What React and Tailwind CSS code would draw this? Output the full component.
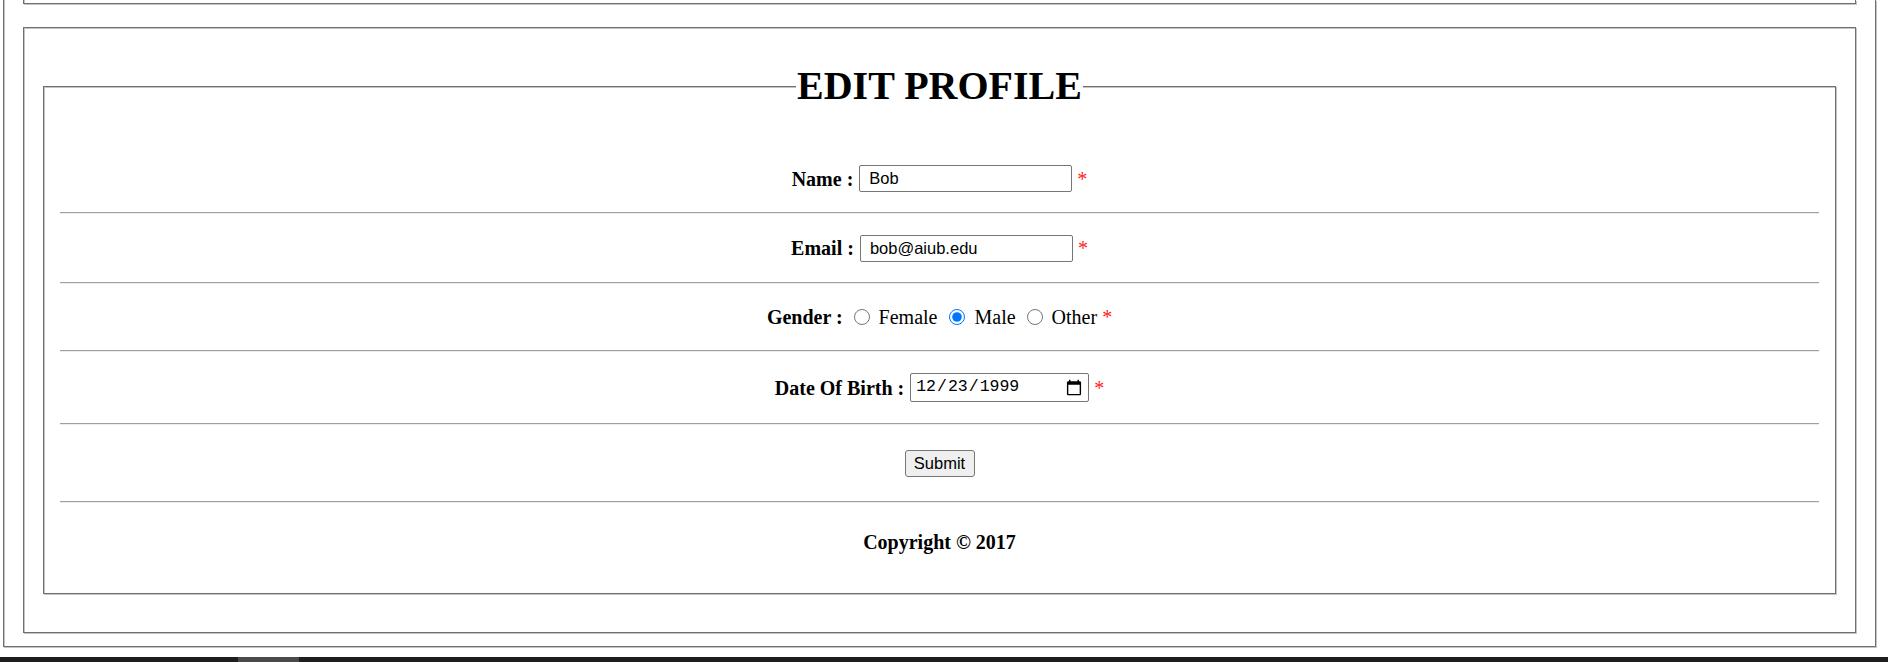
import React from 'react';

const box =
  'border border-[#707070] shadow-[1px_1px_0_#c4c4c4,inset_1px_1px_0_#c4c4c4]';
const label = "font-['Liberation_Serif',serif] text-[20px] font-bold text-black";
const star = "font-['Liberation_Serif',serif] text-[20px] text-[#ff2020]";
const field =
  "h-[27px] w-[213px] border border-[#767676] rounded-[2px] bg-white pl-[9px] font-['Liberation_Sans',sans-serif] text-[16.5px] text-black outline-none";

function Rule() {
  return <div className="border-t border-b border-t-[#a0a0a0] border-b-[#ececec]" />;
}

function TextRow({ name, value, height }) {
  return (
    <div className={`flex items-center justify-center ${height}`}>
      <span className={label}>{name} :</span>
      <input type="text" defaultValue={value} className={`ml-[6px] ${field}`} />
      <span className={`ml-[5px] ${star}`}>*</span>
    </div>
  );
}

export default function App() {
  const genders = ['Female', 'Male', 'Other'];

  return (
    <div className="h-[662px] w-full overflow-hidden bg-white font-['Liberation_Serif',serif]">
      <div className="ml-[3px] w-[1873px] border-x border-b border-[#707070] px-[19px] pb-[13px] shadow-[1px_1px_0_#c4c4c4,inset_1px_0_0_#c4c4c4]">
        <div className="h-[4px] border-x border-b border-[#707070] shadow-[1px_1px_0_#c4c4c4,inset_1px_0_0_#c4c4c4]" />

        <div className={`mt-[23px] px-[19px] pt-[35px] pb-[38px] ${box}`}>
          <fieldset className="border border-[#707070] px-[16px] pb-[12px] shadow-[1px_1px_0_#c4c4c4,inset_1px_1px_0_#c4c4c4]">
            <legend className="mx-auto bg-white px-[1px] text-[40px] leading-[46px] font-bold text-black">
              EDIT PROFILE
            </legend>

            <div className="mt-[36px]" />
            <TextRow name="Name" value="Bob" height="h-[67px]" />
            <Rule />
            <TextRow name="Email" value="bob@aiub.edu" height="h-[68px]" />
            <Rule />

            <div className="flex h-[66px] items-center justify-center text-[20px] text-black">
              <span className={label}>Gender :</span>
              {genders.map((g, i) => (
                <React.Fragment key={g}>
                  <input
                    type="radio"
                    name="gender"
                    defaultChecked={g === 'Male'}
                    className={`h-[16px] w-[16px] ${i === 1 ? 'ml-[12px]' : 'ml-[11px]'}`}
                  />
                  <span className="ml-[9px]">{g}</span>
                </React.Fragment>
              ))}
              <span className={`ml-[5px] ${star}`}>*</span>
            </div>
            <Rule />

            <div className="flex h-[71px] items-center justify-center">
              <span className={label}>Date Of Birth :</span>
              <input
                type="date"
                defaultValue="1999-12-23"
                className="ml-[6px] h-[29px] w-[179px] border border-[#767676] rounded-[2px] bg-white pl-[4px] pr-[5px] font-['Liberation_Mono',monospace] text-[16.5px] text-black outline-none [&::-webkit-calendar-picker-indicator]:h-[18px] [&::-webkit-calendar-picker-indicator]:w-[18px] [&::-webkit-calendar-picker-indicator]:p-0"
              />
              <span className={`ml-[5px] ${star}`}>*</span>
            </div>
            <Rule />

            <div className="flex h-[76px] items-center justify-center">
              <button
                type="button"
                className="h-[27px] w-[70px] border border-[#767676] rounded-[3px] bg-[#efefef] font-['Liberation_Sans',sans-serif] text-[16.5px] text-black"
              >
                Submit
              </button>
            </div>
            <Rule />

            <div className="flex h-[78px] items-center justify-center">
              <span className={label}>Copyright © 2017</span>
            </div>
          </fieldset>
        </div>
      </div>

      <div className="mt-[10px] h-[5px] bg-[#1e1e1e]">
        <div className="ml-[238px] h-full w-[61px] bg-[#4a4a4a]" />
      </div>
    </div>
  );
}
